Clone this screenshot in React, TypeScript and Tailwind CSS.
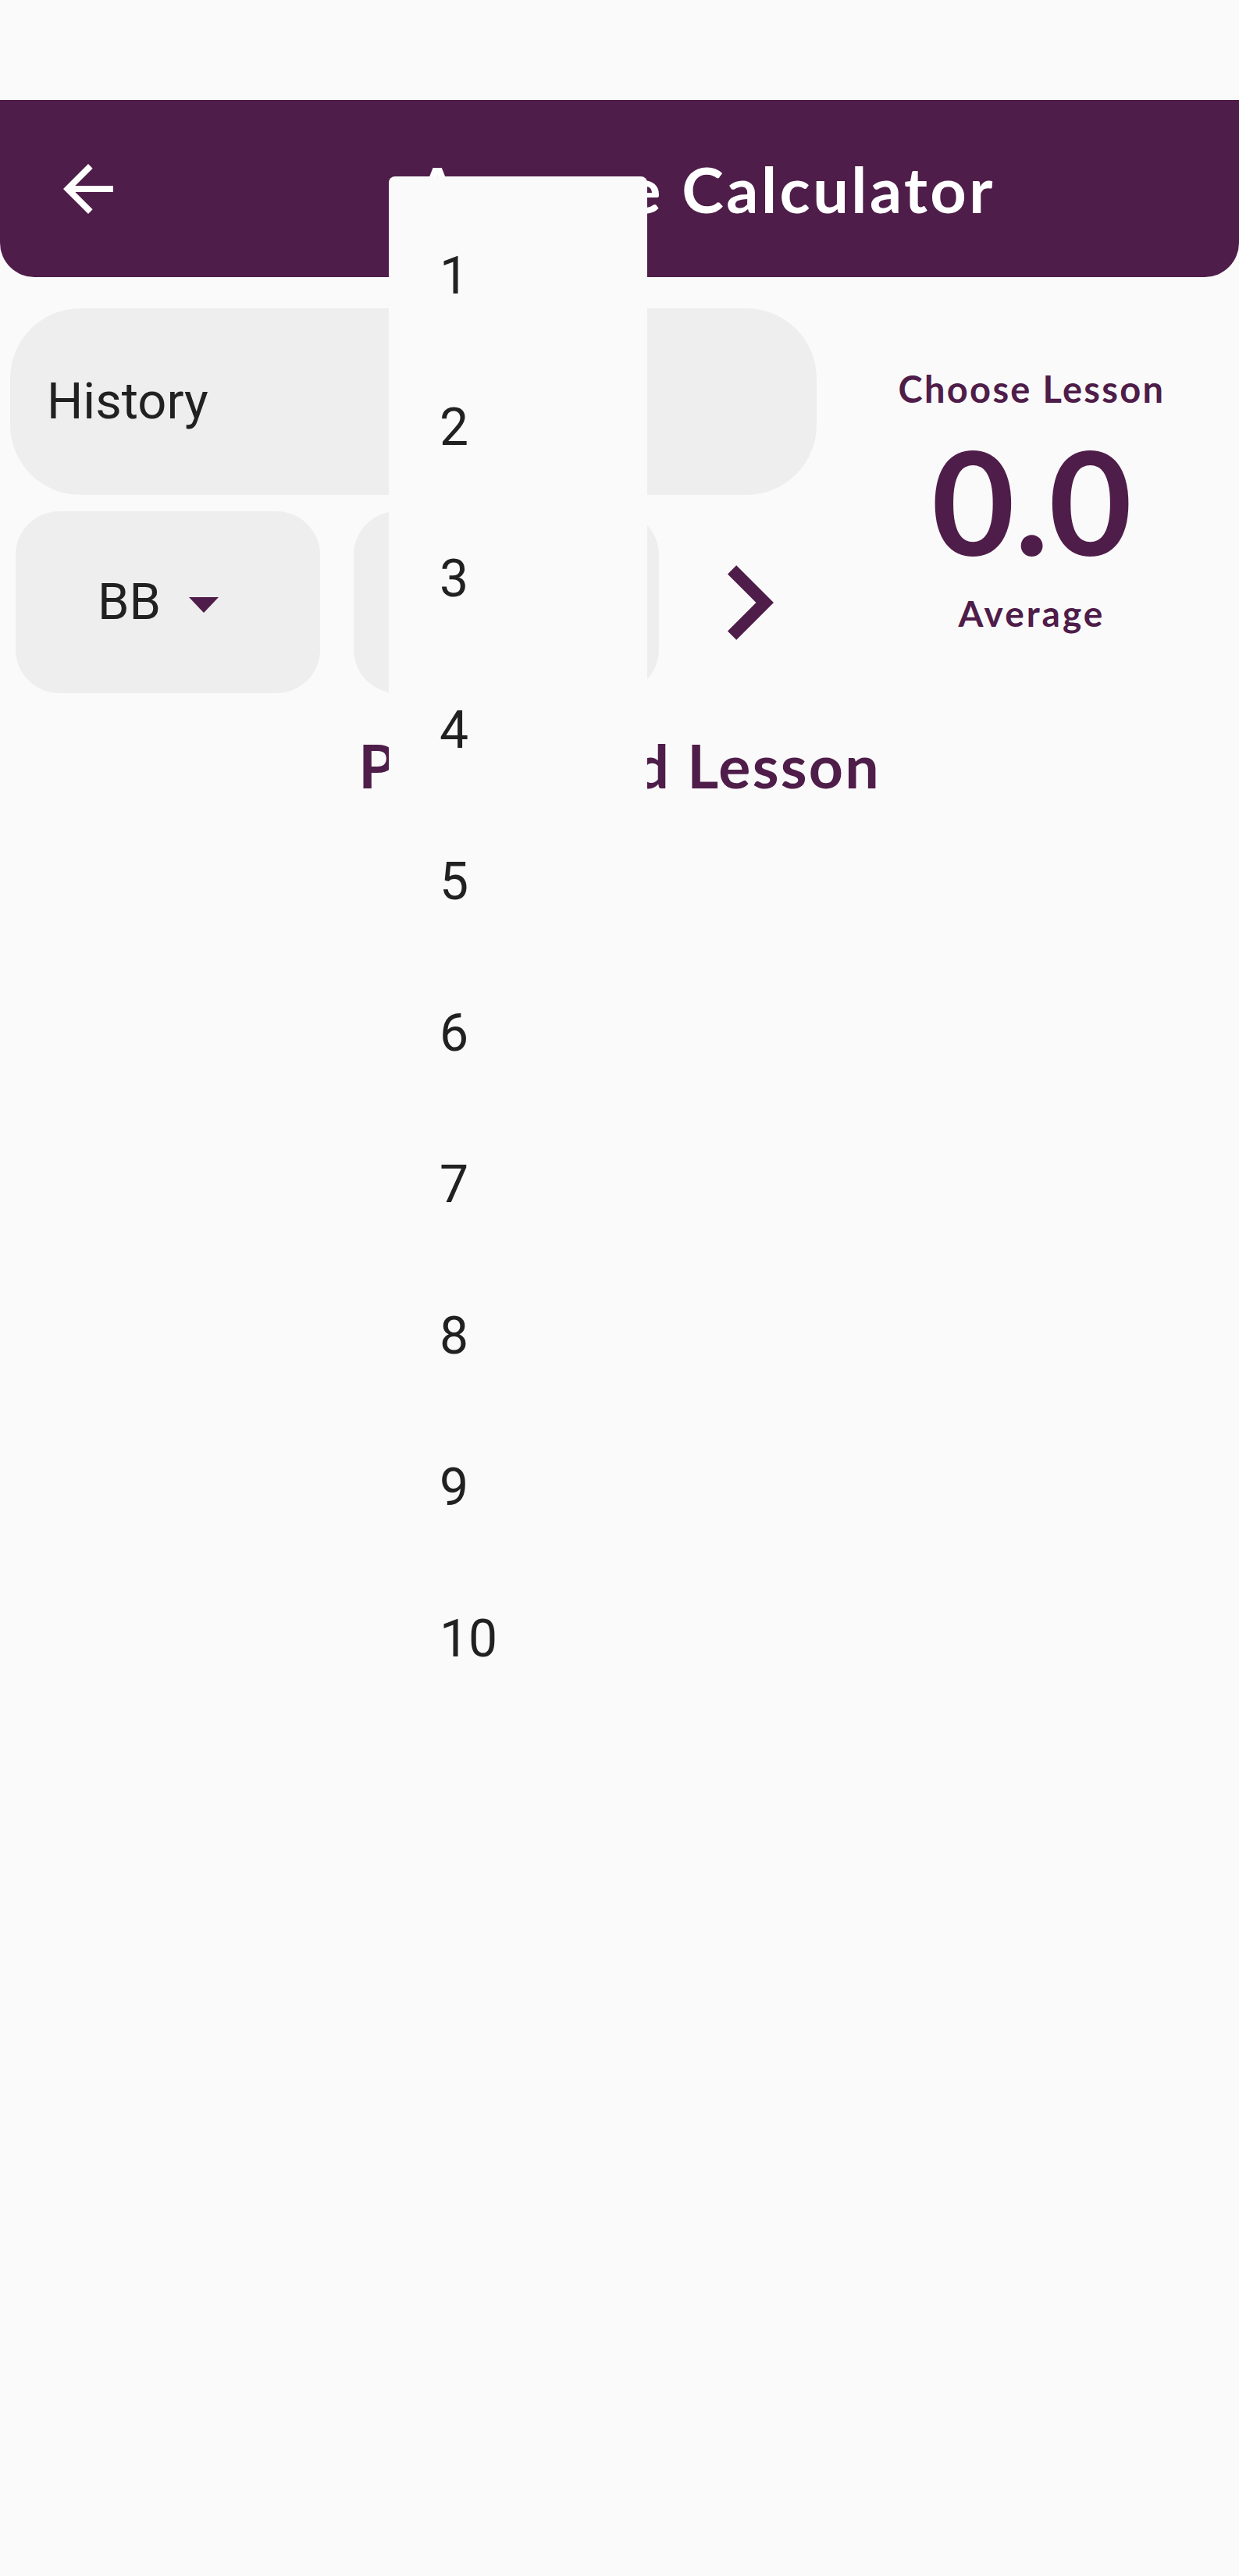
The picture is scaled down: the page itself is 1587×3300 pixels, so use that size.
import React from "react";

const PURPLE = "#4f1d49";

function ArrowBack() {
  return (
    <svg width="96" height="96" viewBox="0 0 24 24" fill="#ffffff">
      <path d="M20 11H7.83l5.59-5.59L12 4l-8 8 8 8 1.41-1.41L7.83 13H20v-2z" />
    </svg>
  );
}

function Chevron() {
  return (
    <svg width="59" height="96" viewBox="8.59 6 7.41 12" fill={PURPLE}>
      <path d="M10 6L8.59 7.41 13.17 12l-4.58 4.59L10 18l6-6z" />
    </svg>
  );
}

export default function App() {
  const items = ["1", "2", "3", "4", "5", "6", "7", "8", "9", "10"];
  return (
    <div
      className="relative w-[1587px] h-[3300px] bg-[#fafafa] overflow-hidden"
      style={{ fontFamily: "Lato, 'Noto Sans', sans-serif" }}
    >
      <div className="h-[128px]" />
      <header className="h-[227px] bg-[#4f1d49] rounded-b-[44px] flex items-center">
        <div className="w-[220px] h-full flex items-center pl-[65px]">
          <ArrowBack />
        </div>
        <div className="flex-1 text-center text-white font-bold text-[81px] leading-none tracking-[3.5px]">
          Average Calculator
        </div>
      </header>

      <div className="flex">
        <div className="w-[1046px]">
          <div className="ml-[13px] mt-[40px] w-[1033px] h-[239px] rounded-[90px] bg-[#eeeeee] flex items-center pl-[47px]">
            <span
              className="text-[65px] leading-none text-[#212121]"
              style={{ fontFamily: "Roboto, sans-serif" }}
            >
              History
            </span>
          </div>
          <div className="flex items-center mt-[21px]">
            <div className="ml-[20px] w-[390px] h-[233px] rounded-[56px] bg-[#eeeeee] flex items-center pl-[105px]">
              <span
                className="text-[65px] leading-none text-[#212121]"
                style={{ fontFamily: "Roboto, sans-serif" }}
              >
                BB
              </span>
              <svg width="38" height="20" viewBox="0 0 38 20" className="ml-[36px] mt-[6px]">
                <polygon points="0,0 38,0 19,20" fill={PURPLE} />
              </svg>
            </div>
            <div className="ml-[43px] w-[391px] h-[233px] rounded-[56px] bg-[#eeeeee]" />
            <div className="ml-[88px]">
              <Chevron />
            </div>
          </div>
        </div>
        <div className="flex-1 flex flex-col items-center pl-[10px] text-[#4f1d49]">
          <div className="mt-[120px] text-[47px] font-bold leading-none tracking-[2.3px]">Choose Lesson</div>
          <div className="mt-[27px] text-[184px] font-bold leading-none">0.0</div>
          <div className="mt-[30px] text-[46px] font-bold leading-none tracking-[3px]">Average</div>
        </div>
      </div>

      <div className="mt-[54px] text-center text-[77px] font-bold leading-none text-[#4f1d49] tracking-[2.2px]">
        Please Add Lesson
      </div>

      <div className="absolute left-[498px] top-[226px] w-[331px] rounded-[8px] bg-[#fafafa] pt-[31px] pb-[31px]">
        {items.map((n) => (
          <div key={n} className="h-[194px] flex items-center pl-[65px]">
            <span
              className="text-[66px] leading-none text-[#212121]"
              style={{ fontFamily: "Roboto, sans-serif" }}
            >
              {n}
            </span>
          </div>
        ))}
      </div>
    </div>
  );
}
